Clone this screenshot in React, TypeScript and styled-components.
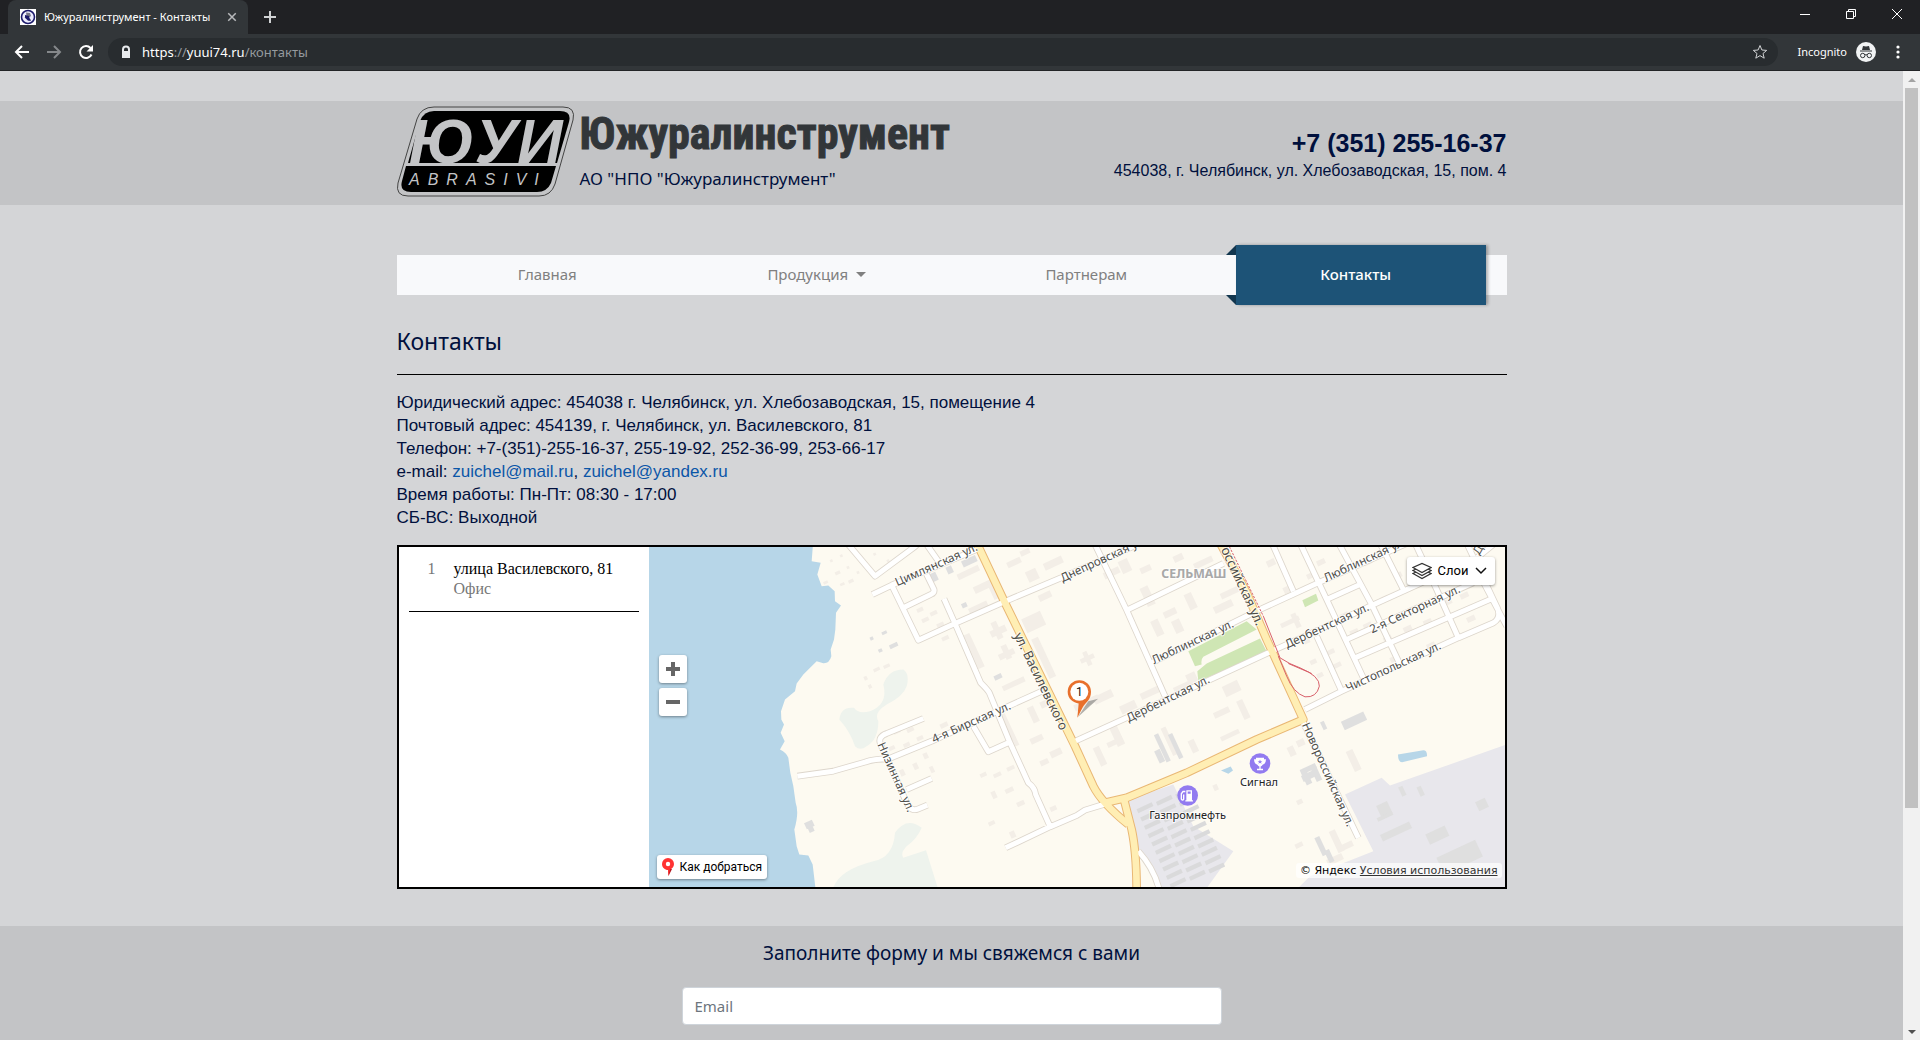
import React from "react";
import styled, { createGlobalStyle } from "styled-components";

const sans = `"Liberation Sans", Arial, sans-serif`;
const human = `"Noto Sans", "Open Sans", sans-serif`;

const GlobalStyle = createGlobalStyle`
  *, *::before, *::after { box-sizing: border-box; }
  body { margin: 0; background: #d4d5d7; color: #00103d; font: 17px/23px ${sans}; }
  button, input { font: inherit; color: inherit; }
  a { color: #0b56a8; text-decoration: none; }
  h1, h2, p, ul, ol { margin: 0; padding: 0; font-weight: 400; }
  ul, ol { list-style: none; }
  svg { display: block; }
`;

const Window = styled.div`
  display: flex;
  flex-direction: column;
  height: 100vh;
  overflow: hidden;
`;

/* ---------- browser frame ---------- */

const TabStrip = styled.div`
  display: flex;
  align-items: flex-end;
  height: 34px;
  padding-left: 8px;
  background: #202124;
  color: #fff;
  font: 11px/16px ${human};
`;
const Tab = styled.div`
  display: flex;
  align-items: center;
  gap: 8px;
  width: 240px;
  height: 34px;
  padding: 0 10px 0 12px;
  border-radius: 8px 8px 0 0;
  background: #323639;
`;
const TabTitle = styled.span`
  flex: 1;
  white-space: nowrap;
`;
const IconButton = styled.button<{ $w?: number; $color?: string }>`
  display: grid;
  place-items: center;
  width: ${(p) => p.$w ?? 32}px;
  height: 32px;
  padding: 0;
  border: 0;
  background: none;
  color: ${(p) => p.$color ?? "#fff"};
`;
const StripNew = styled.div`
  display: flex;
  align-self: center;
  margin-left: 6px;
`;
const WindowControls = styled.div`
  display: flex;
  align-self: flex-start;
  margin-left: auto;
  height: 28px;
  align-items: center;
`;
const Toolbar = styled.div`
  display: flex;
  align-items: center;
  height: 37px;
  padding: 0 6px;
  border-bottom: 1px solid #222426;
  background: #323639;
  color: #fff;
  font: 11px/16px ${human};
`;
const AddressBar = styled.div`
  display: flex;
  flex: 1;
  align-items: center;
  gap: 10px;
  height: 28px;
  margin: 0 20px 0 6px;
  padding: 0 2px 0 12px;
  border-radius: 14px;
  background: #282c2f;
  font-size: 13px;
`;
const Url = styled.span`
  flex: 1;
  color: #fff;
  i { color: #959a9e; font-style: normal; }
`;
const Profile = styled.button`
  display: flex;
  align-items: center;
  gap: 9px;
  padding: 0 6px 0 0;
  border: 0;
  background: none;
  font-size: 11px;
`;
const Viewport = styled.div`
  display: flex;
  flex: 1;
  min-height: 0;
`;
const Page = styled.div`
  flex: 1;
  min-width: 0;
  padding-top: 30px;
  overflow: hidden;
`;
const ScrollTrack = styled.div`
  display: flex;
  flex-direction: column;
  width: 17px;
  background: #f1f1f1;
`;
const ScrollArrow = styled.div<{ $color: string }>`
  display: grid;
  place-items: center;
  height: 17px;
  color: ${(p) => p.$color};
`;
const ScrollRail = styled.div`
  flex: 1;
`;
const ScrollThumb = styled.div`
  height: 77%;
  margin: 0 2px;
  background: #c1c1c1;
`;

/* ---------- site ---------- */

const Container = styled.div`
  max-width: 1110px;
  margin: 0 auto;
`;
const Band = styled.header`
  background: #c3c4c6;
`;
const HeaderRow = styled(Container)`
  display: flex;
  align-items: flex-start;
  justify-content: space-between;
  height: 104px;
  padding-top: 5px;
`;
const Brand = styled.a`
  display: flex;
  gap: 5px;
`;
const BrandText = styled.span`
  display: flex;
  flex-direction: column;
  color: #00103d;
  font: 17px/24px ${human};
`;
const BrandName = styled.strong`
  margin: 4px 0 9px;
  color: #323639;
  font: 700 44px/48px "Liberation Sans Narrow", "Roboto Condensed", "Open Sans Condensed", sans-serif;
  -webkit-text-stroke: 1px #323639;
`;
const HeaderContacts = styled.address`
  display: flex;
  flex-direction: column;
  align-items: flex-end;
  margin-top: 21px;
  font: 16px/24px ${sans};
`;
const Phone = styled.a`
  color: #00103d;
  font: 700 25px/32px ${sans};
`;
const NavBar = styled(Container).attrs({ as: "nav" })`
  margin-top: 50px;
  padding: 0 16px;
  background: #f8f9fb;
`;
const NavList = styled.ul`
  display: grid;
  grid-template-columns: repeat(4, 1fr);
  height: 40px;
`;
const NavLink = styled.a<{ $active?: boolean }>`
  display: flex;
  position: relative;
  align-items: center;
  justify-content: center;
  gap: 8px;
  height: 40px;
  padding-bottom: 2px;
  color: #808080;
  font: 15px/24px ${human};
  ${(p) =>
    p.$active &&
    `
    height: 60px;
    margin: -10px 5px 0 15px;
    padding-right: 10px;
    background: #1d5377;
    box-shadow: 2px 0 3px rgba(0, 0, 0, 0.3);
    color: #fff;
    font-weight: 500;
    &::before, &::after {
      content: "";
      position: absolute;
      left: -10px;
      width: 10px;
      height: 10px;
      background: #12364e;
    }
    &::before { top: 0; clip-path: polygon(100% 0, 100% 100%, 0 100%); }
    &::after { bottom: 0; clip-path: polygon(0 0, 100% 0, 100% 100%); }
  `}
`;
const Caret = styled.span`
  border: 5px solid transparent;
  border-top-color: currentColor;
  border-bottom: 0;
`;
const Title = styled.h1`
  margin-top: 31px;
  padding-bottom: 18px;
  border-bottom: 1px solid #000;
  font: 23px/30px ${human};
`;
const Details = styled.p`
  margin: 16px 0;
`;
const MapFrame = styled.section`
  display: flex;
  height: 344px;
  border: 2px solid #000;
  background: #fff;
`;
const Places = styled.ol`
  width: 250px;
  padding: 0 10px;
  font: 16px/20px "Liberation Serif", "Times New Roman", serif;
`;
const Place = styled.li`
  display: grid;
  grid-template-columns: 16px 1fr;
  column-gap: 10px;
  padding: 12px 0 12px 19px;
  border-bottom: 1px solid #000;
  color: #000;
`;
const Muted = styled.span<{ $col?: number }>`
  grid-column: ${(p) => p.$col ?? 1};
  color: #777;
`;
const MapArea = styled.div`
  position: relative;
  flex: 1;
  min-width: 0;
  overflow: hidden;
  background: #fdfaf1;
`;
const MapCanvas = styled.svg`
  width: 100%;
  height: 100%;
  font-family: ${human};
`;
const MapButton = styled.button`
  display: flex;
  align-items: center;
  justify-content: center;
  padding: 0;
  border: 0;
  border-radius: 3px;
  background: #fff;
  box-shadow: 0 1px 3px rgba(0, 0, 0, 0.4);
  color: #000;
`;
const ZoomControl = styled.div`
  position: absolute;
  top: 108px;
  left: 10px;
  display: grid;
  gap: 5px;
  ${MapButton} { width: 28px; height: 28px; }
`;
const RouteButton = styled(MapButton)`
  position: absolute;
  bottom: 8px;
  left: 8px;
  gap: 6px;
  height: 24px;
  padding: 0 5px;
  font: 12px/16px Roboto, sans-serif;
`;
const LayersButton = styled(MapButton)`
  position: absolute;
  top: 10px;
  right: 10px;
  gap: 6px;
  height: 28px;
  padding: 0 8px 0 5px;
  font: 13px/16px Roboto, sans-serif;
`;
const Copyright = styled.div`
  position: absolute;
  right: 3px;
  bottom: 9px;
  padding: 0 4px;
  border-radius: 3px;
  background: rgba(255, 255, 255, 0.7);
  color: #000;
  font: 11px/15px "DejaVu Sans", sans-serif;
  a { color: #333; text-decoration: underline; }
`;
const Feedback = styled.footer`
  margin-top: 37px;
  padding: 13px 0 60px;
  background: #c3c4c6;
`;
const FeedbackForm = styled.form`
  display: grid;
  gap: 20px;
  max-width: 540px;
  margin: 0 auto;
`;
const FormTitle = styled.h2`
  font: 19px/28px ${human};
  text-align: center;
`;
const Field = styled.input`
  width: 100%;
  height: 38px;
  padding: 0 12px;
  border: 1px solid #ced4da;
  border-radius: 4px;
  background: #fff;
  font: 15px/24px ${human};
  &::placeholder { color: #6c757d; opacity: 1; }
`;

/* ---------- drawings ---------- */

const Logo = () => (
  <svg width="178" height="91" viewBox="0 0 178 91" role="img" aria-label="ЮУИ Abrasivi">
    <path d="M37 1H166Q179 1 176 14L158 78Q154 90 142 90H11Q-2 90 1 77L20 13Q24 1 37 1Z" fill="#c3c4c6" stroke="#444" strokeWidth="1" />
    <path d="M37 5H163Q175 5 172 16L160 57H11L23 15Q27 5 37 5Z" />
    <path d="M9 60H159L154 77Q150 86 140 86H14Q2 86 5 75Z" />
    <g fill="#c3c4c6" fontFamily="Liberation Sans, sans-serif" fontStyle="italic">
      <text x="12" y="57" fontSize="63" fontWeight="700">ЮУИ</text>
      <text x="12" y="79" fontSize="16" letterSpacing="8">ABRASIVI</text>
    </g>
  </svg>
);

const Favicon = () => (
  <svg width="16" height="16" viewBox="0 0 16 16">
    <path fill="#fff" d="M0 0h16v16H0z" />
    <circle cx="8" cy="8" r="6.500" fill="#eef" stroke="#1c1a6c" strokeWidth="1.600" />
    <path d="M6 3.500l4 .5 1 3-2 1.500 2 2.500-3 .5-3.500-3L6.500 7z" fill="#778" />
    <path d="M5 6l4 1 .5 2.500L11 12l-3-.5-3-3z" fill="#1c1a6c" />
  </svg>
);

const roads: string[] = [
  "M625 15L705 110L825 21L835 12",
  "M697 165L755 137L1010 30",
  "M755 137L835 302L945 252L1090 188L1270 112L1500 12",
  "M860 15L895 65M860 105L882 150Q884 160 872 165L790 205",
  "M912 178L945 252L1022 430Q1044 452 1048 460L1110 610L1165 730Q1185 745 1187 765L1230 860",
  "M1097 925L1230 862L1310 828L1335 812L1400 792",
  "M1205 455L875 605L745 658Q700 658 675 668L580 695L472 710",
  "M850 537L740 582Q712 592 722 615L800 790Q812 818 835 808L862 797",
  "M800 750L875 717",
  "M1000 560L1045 637L1105 610",
  "M1365 15L1460 212L1575 470M1460 212L1750 72",
  "M1305 605L1460 535L1690 430L1885 340L2180 205L2400 105",
  "M1535 370L1860 210L2035 130L2300 12",
  "M1898 15L1960 155M1982 15L2060 180L2170 415M2030 290L2105 455",
  "M2060 180L2160 135M2098 15L2195 195L2280 375M2222 15L2290 150",
  "M2327 15L2390 150L2455 295M2120 300L2500 130M2145 355L2550 180",
  "M1995 510L2105 455L2455 295L2560 250Q2585 235 2572 205L2482 15",
  "M2510 90L2600 260M2480 80L2560 15",
  "M1990 550L2155 895",
  "M1495 935Q1545 990 1560 1060",
];
const mainRoads: string[] = [
  "M1010 10L1095 190L1305 620L1360 740Q1385 790 1465 855",
  "M1740 10L1820 160L1880 300L1990 540L1850 600L1640 700L1460 775L1395 790",
  "M1452 780L1475 870Q1490 940 1490 1060",
];

type Box = [number, number, number, number];
const houses: Box[] = [
  [950, 90, 70, 18], [1000, 130, 60, 22], [985, 195, 60, 18], [1050, 120, 22, 60], [1100, 60, 44, 18], [1160, 90, 34, 34], [1210, 60, 60, 22], [1140, 30, 30, 16],
  [1150, 225, 62, 45], [1195, 160, 40, 20], [990, 280, 22, 110], [1050, 265, 50, 20], [1062, 245, 18, 55], [1075, 335, 50, 18], [1090, 315, 18, 45], [1200, 290, 22, 130],
  [1085, 425, 72, 16], [1095, 520, 22, 105], [1170, 500, 20, 50], [1200, 480, 40, 20], [1170, 590, 40, 18], [1230, 630, 36, 20], [1200, 660, 26, 16], [1060, 700, 24, 12],
  [1100, 680, 24, 12], [1020, 700, 20, 12], [1095, 745, 26, 14], [1130, 785, 24, 14], [1055, 755, 14, 22], [1230, 800, 20, 14], [1045, 845, 20, 12], [1110, 875, 16, 20],
  [845, 235, 22, 12], [830, 205, 20, 12], [870, 215, 22, 12], [890, 250, 22, 12], [905, 290, 22, 12], [700, 385, 20, 10], [730, 375, 20, 10], [672, 410, 10, 12], [685, 435, 10, 12],
  [760, 570, 22, 12], [800, 565, 22, 12], [745, 620, 20, 12], [790, 610, 20, 12], [830, 590, 20, 12], [780, 690, 14, 20], [820, 670, 14, 20], [870, 680, 12, 20], [850, 640, 14, 18], [900, 550, 24, 14],
  [570, 60, 8, 8], [600, 45, 8, 8], [585, 95, 16, 10], [620, 80, 8, 8], [625, 120, 16, 10], [650, 95, 8, 8], [600, 130, 14, 8], [550, 125, 14, 8], [740, 60, 8, 8], [700, 40, 8, 8],
  [1390, 90, 50, 20], [1440, 60, 30, 40], [1500, 80, 34, 18], [1510, 140, 26, 60], [1600, 45, 30, 20], [1660, 60, 60, 18], [1740, 150, 60, 18], [1640, 160, 24, 50], [1720, 190, 60, 22], [1570, 210, 40, 20],
  [1540, 240, 24, 50], [1600, 240, 26, 40], [1320, 350, 44, 14], [1335, 335, 14, 44], [1300, 480, 80, 20], [1360, 460, 60, 24], [1440, 490, 50, 26], [1500, 450, 60, 20], [1420, 560, 24, 60], [1370, 620, 20, 60],
  [1400, 600, 50, 16], [1600, 430, 70, 22], [1640, 400, 30, 30], [1720, 510, 50, 18], [1750, 430, 50, 34], [1740, 580, 60, 14], [1800, 480, 20, 60], [1650, 600, 20, 40], [1580, 560, 16, 90],
  [1920, 240, 60, 14], [1960, 220, 16, 46], [1990, 300, 20, 12], [2010, 360, 20, 14], [2030, 400, 20, 14], [2060, 330, 24, 14], [2080, 370, 24, 14], [2100, 220, 26, 16], [2130, 270, 26, 16], [2170, 250, 26, 16],
  [2170, 330, 26, 16], [2230, 290, 26, 16], [2290, 260, 26, 16], [2350, 240, 26, 16], [2220, 170, 26, 16], [2260, 100, 26, 16], [2000, 100, 26, 16], [2030, 60, 26, 16], [1930, 140, 26, 20], [1880, 60, 26, 20],
  [2120, 80, 26, 16], [2170, 60, 26, 16], [2410, 180, 26, 16], [2460, 160, 26, 16], [2480, 230, 26, 16], [2360, 310, 26, 16], [2250, 350, 26, 16], [2130, 630, 22, 66], [1945, 620, 20, 30], [1970, 600, 24, 20],
  [1970, 780, 18, 14], [1965, 910, 24, 14], [2080, 870, 20, 70], [2100, 910, 40, 18], [2060, 950, 50, 20], [1720, 735, 14, 18],
];
const blocks: Box[] = [
  [870, 100, 22, 26], [920, 80, 18, 22], [965, 55, 46, 20], [965, 190, 16, 14], [1062, 405, 24, 14], [495, 845, 26, 20], [505, 860, 16, 18], [690, 292, 10, 10], [715, 328, 12, 10], [748, 312, 26, 12], [725, 275, 16, 9],
  [1560, 580, 14, 90], [1600, 580, 14, 80], [1550, 630, 18, 40], [2105, 530, 74, 28], [1980, 680, 50, 16], [1990, 690, 18, 46], [2020, 680, 18, 46], [2045, 545, 12, 26], [2035, 890, 16, 60], [2060, 930, 16, 40], [1985, 700, 40, 20],
  [2215, 790, 36, 40], [2220, 865, 96, 22], [2360, 870, 64, 34], [2395, 925, 128, 56], [2280, 740, 14, 30], [2335, 740, 14, 30], [2510, 780, 32, 30], [2210, 825, 50, 12],
];

const sheds = Array.from({ length: 30 }, (_, i): Box => {
  const row = Math.floor(i / 3);
  const col = i % 3;
  return [1490 + col * 58 + row * 11, 798 + row * 25 - col * 22, 50, 13];
});

const Tilted = ({ boxes, fill }: { boxes: Box[]; fill: string }) => (
  <g fill={fill}>
    {boxes.map(([x, y, w, h], i) => (
      <rect key={i} x={x} y={y} width={w} height={h} transform={`rotate(-25 ${x + w / 2} ${y + h / 2})`} />
    ))}
  </g>
);

type Label = { t: string; x: number; y: number; a: number; s?: number };
const labels: Label[] = [
  { t: "Цимлянская ул.", x: 772, y: 140, a: -24 },
  { t: "4-я Бирская ул.", x: 882, y: 611, a: -24 },
  { t: "Низинная ул.", x: 712, y: 615, a: 66 },
  { t: "ул. Василевского", x: 1121, y: 287, a: 64, s: 39 },
  { t: "Днепровская ул.", x: 1268, y: 128, a: -25 },
  { t: "оссийская ул.", x: 1742, y: 30, a: 65, s: 39 },
  { t: "Люблинская ул.", x: 1542, y: 374, a: -25 },
  { t: "Дербентская ул.", x: 1466, y: 548, a: -26 },
  { t: "Люблинская ул.", x: 2058, y: 128, a: -25 },
  { t: "Дербентская ул.", x: 1942, y: 327, a: -25 },
  { t: "2-я Секторная ул.", x: 2196, y: 282, a: -25 },
  { t: "Чистопольская ул.", x: 2124, y: 458, a: -25 },
  { t: "Новороссийская ул.", x: 1985, y: 556, a: 66 },
  { t: "Д", x: 2518, y: 48, a: -60 },
];

const CityMap = () => (
  <MapCanvas viewBox="27 21 2568 1023" preserveAspectRatio="xMinYMid slice" role="img" aria-label="Карта">
    <path fill="#fdfaf1" d="M0 0h2700v1100H0z" />
    <path fill="#b7d6e8" d="M0 0H520L515 65L542 70L532 105L545 140L565 138L584 155L585 185L603 198L588 220L586 270L582 300L572 330L574 350Q568 372 550 371L530 365L490 405L470 432L465 455L435 480L423 515L424 540L432 555L422 580L434 605L420 630Q440 640 445 655L451 700L460 740L467 790Q478 820 463 870L470 920L478 945L505 948L518 975L528 1060H0z" />
    <path fill="#eef3ed" d="M598 540Q602 500 642 505Q655 525 690 515Q745 495 730 435Q745 390 790 390Q810 405 800 440Q790 470 740 495Q700 520 715 545Q715 600 680 620Q660 635 645 620Q630 575 598 540ZM580 1044Q600 990 700 965Q760 955 765 880Q800 830 845 865Q830 900 800 920Q780 940 790 955L858 932L893 1044Z" />
    <path fill="#e8e7ec" d="M1465 780L1600 735L1660 860L1780 935L1690 1060L1560 1060L1480 900ZM2115 765L2225 715L2250 738L2600 615V1060H1960L2010 1010L2200 935Z" />
    <path fill="#cfe6b4" d="M1645 335L1820 245L1850 270L1690 352Q1682 360 1685 375L1665 380ZM1672 395L1700 372L1860 297L1882 340L1675 425ZM1987 182L2028 163L2035 183L1995 203Z" />
    <Tilted boxes={houses} fill="#f3eee7" />
    <Tilted boxes={blocks} fill="#dfdfdf" />
    <Tilted boxes={sheds} fill="#dadadb" />
    <path fill="#b7d6e8" d="M2274 645L2350 632Q2362 632 2361 650L2286 668Q2274 668 2274 645ZM1743 693L1772 681L1779 693L1765 703Z" />
    <g fill="none" strokeLinejoin="round">
      <path d={roads.join("")} stroke="#ddd6cc" strokeWidth="20" />
      <path d={mainRoads.join("")} stroke="#e9b774" strokeWidth="26" />
      <path d={roads.join("")} stroke="#fff" strokeWidth="15" />
      <path d={mainRoads.join("")} stroke="#ffeeb4" strokeWidth="20" />
      <path d="M1870 230L1920 355Q1950 375 1980 385Q2040 410 2038 440Q2030 475 1995 472Q1960 460 1940 410L1915 350M1945 372L2015 402" stroke="#d8606a" strokeWidth="3" />
      <path d="M1768 21L1870 230" stroke="#d8606a" strokeWidth="3" strokeDasharray="7 4" />
    </g>
    <g fill="#4d4d48" stroke="#fff" strokeOpacity=".75" strokeWidth="6" paintOrder="stroke" strokeLinejoin="round">
      {labels.map((l) => (
        <text key={l.t + l.x} x={l.x} y={l.y} fontSize={l.s ?? 35} transform={`rotate(${l.a} ${l.x} ${l.y})`}>{l.t}</text>
      ))}
      <text x="1564" y="115" fontSize="37" fill="#a8a8a8" fontWeight="700">СЕЛЬМАШ</text>
    </g>
    <g fill="#222" stroke="#fff" strokeOpacity=".75" strokeWidth="6" paintOrder="stroke" fontSize="33" textAnchor="middle">
      <text x="1857" y="738">Сигнал</text>
      <text x="1643" y="837">Газпромнефть</text>
    </g>
    <circle cx="1860" cy="672" r="31" fill="#927bf0" />
    <path fill="#fff" d="M1848 655h24v4h6q0 14-10 17-3 5-6 5v7h7v4h-18v-4h7v-7q-3 0-6-5-10-3-10-17h6z" />
    <path d="M1860 660l2 5h5l-4 3 2 5-5-3-5 3 2-5-4-3h5z" fill="#927bf0" />
    <circle cx="1643" cy="768" r="31" fill="#927bf0" />
    <path d="M1639 752h17v30h3v4h-23v-4h3zM1643 756v7h9v-7z" fill="#fff" fillRule="evenodd" />
    <path d="M1636 756h-7l-5 7v16q4 6 7 0v-14" fill="none" stroke="#fff" strokeWidth="4" />
    <path d="M1313 533L1345 485L1374 478Z" fill="#555" opacity=".45" />
    <path d="M1318 457m-35 0a35 35 0 1 1 70 0c0 24-16 33-24 45l-17 33 4-43c-16-2-33-13-33-35z" fill="#e8702c" />
    <circle cx="1318" cy="457" r="27" fill="#fff" />
    <text x="1318" y="470" fontSize="36" textAnchor="middle" fill="#111" fontFamily="Roboto, sans-serif">1</text>
  </MapCanvas>
);

const Line = ({ d, size = 16, w = 2 }: { d: string; size?: number; w?: number }) => (
  <svg width={size} height={size} viewBox="0 0 16 16" fill="none" stroke="currentColor" strokeWidth={w}>
    <path d={d} />
  </svg>
);

export default function App() {
  return (
    <Window>
      <GlobalStyle />
      <TabStrip>
        <Tab>
          <Favicon />
          <TabTitle>Южуралинструмент - Контакты</TabTitle>
          <IconButton $w={12} $color="#b8babc" aria-label="Закрыть вкладку"><Line size={12} d="M3 3l10 10M13 3L3 13" /></IconButton>
        </Tab>
        <StripNew>
          <IconButton aria-label="Новая вкладка" $color="#d0d2d4"><Line d="M8 2v12M2 8h12" /></IconButton>
        </StripNew>
        <WindowControls>
          <IconButton $w={46} aria-label="Свернуть"><Line w={1} d="M3 8.500h10" /></IconButton>
          <IconButton $w={46} aria-label="Восстановить"><Line w={1} d="M3.500 5.500h7v7h-7zM5.500 5.500v-2h7v7h-2" /></IconButton>
          <IconButton $w={46} aria-label="Закрыть"><Line w={1} d="M3 3l10 10M13 3L3 13" /></IconButton>
        </WindowControls>
      </TabStrip>
      <Toolbar>
        <IconButton aria-label="Назад"><Line d="M15 8H2M8 2L2 8l6 6" /></IconButton>
        <IconButton aria-label="Вперёд" $color="#85888b"><Line d="M1 8h13M8 2l6 6-6 6" /></IconButton>
        <IconButton aria-label="Обновить">
          <svg width="16" height="16" viewBox="0 0 16 16"><path d="M13.500 10.500A6 6 0 1 1 12.500 4" fill="none" stroke="currentColor" strokeWidth="2" /><path d="M15 1v6.500H8.500z" fill="currentColor" /></svg>
        </IconButton>
        <AddressBar>
          <svg width="12" height="14" viewBox="0 0 12 14"><path d="M2 6V4.500a4 4 0 0 1 8 0V6v7H2zM4 6h4V4.500a2 2 0 0 0-4 0z" fill="#e8eaed" /></svg>
          <Url>https<i>://</i>yuui74.ru<i>/контакты</i></Url>
          <IconButton aria-label="В закладки" $color="#d0d2d4"><Line w={1} size={16} d="M8 1.500l1.900 4.500 4.800.4-3.700 3.100 1.200 4.700L8 11.600l-4.200 2.600L5 9.500 1.300 6.400 6.100 6z" /></IconButton>
        </AddressBar>
        <Profile>
          Incognito
          <svg width="20" height="20" viewBox="0 0 20 20">
            <circle cx="10" cy="10" r="10" fill="#f1f3f4" />
            <path d="M7 4l3 .6L13 4l1 4H6zM4 8.500h12v1H4z" fill="#323639" />
            <g fill="none" stroke="#323639"><circle cx="6.700" cy="13.500" r="2.200" /><circle cx="13.300" cy="13.500" r="2.200" /><path d="M9 13q1-.8 2 0" /></g>
          </svg>
        </Profile>
        <IconButton aria-label="Меню"><svg width="4" height="16" viewBox="0 0 4 16" fill="currentColor"><circle cx="2" cy="3" r="1.600" /><circle cx="2" cy="8" r="1.600" /><circle cx="2" cy="13" r="1.600" /></svg></IconButton>
      </Toolbar>
      <Viewport>
        <Page>
          <Band>
            <HeaderRow>
              <Brand href="#">
                <Logo />
                <BrandText>
                  <BrandName>Южуралинструмент</BrandName>
                  АО "НПО "Южуралинструмент"
                </BrandText>
              </Brand>
              <HeaderContacts>
                <Phone href="tel:+73512551637">+7 (351) 255-16-37</Phone>
                454038, г. Челябинск, ул. Хлебозаводская, 15, пом. 4
              </HeaderContacts>
            </HeaderRow>
          </Band>
          <NavBar>
            <NavList>
              <li><NavLink href="#">Главная</NavLink></li>
              <li><NavLink href="#">Продукция <Caret /></NavLink></li>
              <li><NavLink href="#">Партнерам</NavLink></li>
              <li><NavLink href="#" $active>Контакты</NavLink></li>
            </NavList>
          </NavBar>
          <Container as="main">
            <Title>Контакты</Title>
            <Details>
              Юридический адрес: 454038 г. Челябинск, ул. Хлебозаводская, 15, помещение 4<br />
              Почтовый адрес: 454139, г. Челябинск, ул. Василевского, 81<br />
              Телефон: +7-(351)-255-16-37, 255-19-92, 252-36-99, 253-66-17<br />
              e-mail: <a href="mailto:zuichel@mail.ru">zuichel@mail.ru</a>, <a href="mailto:zuichel@yandex.ru">zuichel@yandex.ru</a><br />
              Время работы: Пн-Пт: 08:30 - 17:00<br />
              СБ-ВС: Выходной
            </Details>
            <MapFrame>
              <Places>
                <Place>
                  <Muted>1</Muted>
                  <span>улица Василевского, 81</span>
                  <Muted $col={2}>Офис</Muted>
                </Place>
              </Places>
              <MapArea>
                <CityMap />
                <ZoomControl>
                  <MapButton aria-label="Приблизить"><svg width="14" height="14" viewBox="0 0 14 14"><path d="M5 0h4v5h5v4H9v5H5V9H0V5h5z" fill="#666" /></svg></MapButton>
                  <MapButton aria-label="Отдалить"><svg width="14" height="14" viewBox="0 0 14 14"><path d="M0 5h14v4H0z" fill="#666" /></svg></MapButton>
                </ZoomControl>
                <RouteButton>
                  <svg width="12" height="18" viewBox="0 0 12 18"><path d="M6 11h4L6.500 18z" fill="#b3141c" /><path d="M6 0a6 6 0 0 1 6 6c0 3-2 4.500-4 5.500L6.500 18 6 12C3 12 0 9.500 0 6a6 6 0 0 1 6-6z" fill="#f33" /><circle cx="6" cy="6" r="2.200" fill="#fff" /></svg>
                  Как добраться
                </RouteButton>
                <LayersButton>
                  <svg width="20" height="18" viewBox="0 0 20 18" fill="#fff" stroke="#333" strokeWidth="1.200"><path d="M1 11.500l9 5 9-5-9-4z" /><path d="M1 8.500l9 5 9-5-9-4z" /><path d="M1 5.500l9 5 9-5-9-4z" /></svg>
                  Слои
                  <svg width="12" height="8" viewBox="0 0 12 8" fill="none" stroke="#111" strokeWidth="1.500"><path d="M1 1l5 5 5-5" /></svg>
                </LayersButton>
                <Copyright>© Яндекс <a href="#">Условия использования</a></Copyright>
              </MapArea>
            </MapFrame>
          </Container>
          <Feedback>
            <FeedbackForm>
              <FormTitle>Заполните форму и мы свяжемся с вами</FormTitle>
              <Field type="email" placeholder="Email" aria-label="Email" />
            </FeedbackForm>
          </Feedback>
        </Page>
        <ScrollTrack>
          <ScrollArrow $color="#a3a3a3"><svg width="8" height="4" viewBox="0 0 8 4"><path d="M4 0l4 4H0z" fill="currentColor" /></svg></ScrollArrow>
          <ScrollRail><ScrollThumb /></ScrollRail>
          <ScrollArrow $color="#505050"><svg width="8" height="4" viewBox="0 0 8 4"><path d="M0 0h8L4 4z" fill="currentColor" /></svg></ScrollArrow>
        </ScrollTrack>
      </Viewport>
    </Window>
  );
}
